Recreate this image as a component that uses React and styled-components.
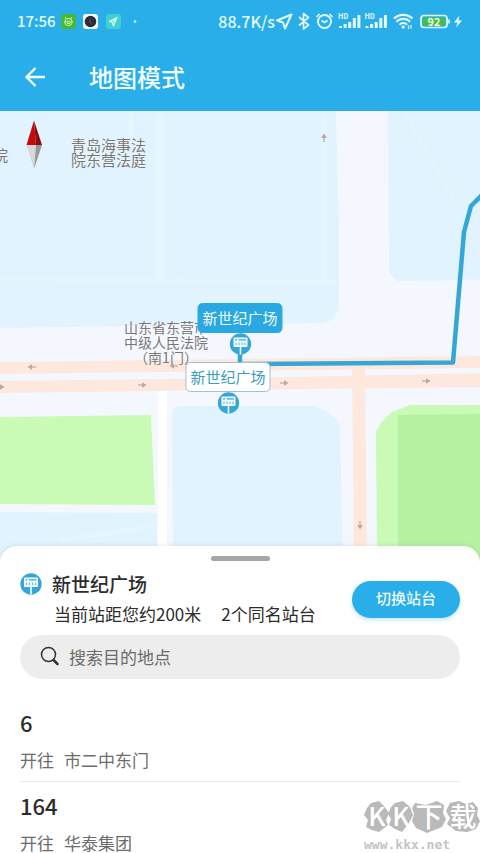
import React from 'react';
import styled, { createGlobalStyle } from 'styled-components';

const routes = [
  { id: 1, name: '6', to: '市二中东门' },
  { id: 2, name: '164', to: '华泰集团' },
];

const arrows = [
  { x: 32, y: 367, turn: 180 },
  { x: 174, y: 366, turn: 180 },
  { x: 0, y: 387, turn: 0 },
  { x: 142, y: 385, turn: 0 },
  { x: 284, y: 383, turn: 0 },
  { x: 426, y: 381, turn: 0 },
  { x: 360, y: 525, turn: 90 },
  { x: 324, y: 138, turn: -90 },
];

const App = () => {
  return (
    <>
      <GlobalStyle />
      <Page>
        <StatusBar />
        <AppBar>
          <BackButton type="button" aria-label="返回">
            <svg width="20" height="20" viewBox="0 0 20 20">
              <path
                d="M20 10H2M10.500 1L1.500 10l9 9"
                fill="none"
                stroke="currentColor"
                strokeWidth="2.400"
              />
            </svg>
          </BackButton>
          <h1>地图模式</h1>
        </AppBar>
        <MapView />
        <Sheet>
          <Handle />
          <Station>
            <div>
              <StationName>
                <StopIcon size={22} />
                新世纪广场
              </StationName>
              <StationInfo>
                <span>当前站距您约200米</span>
                <span>2个同名站台</span>
              </StationInfo>
            </div>
            <SwitchButton type="button">切换站台</SwitchButton>
          </Station>
          <SearchBox>
            <svg width="20" height="20" viewBox="0 0 20 20">
              <circle cx="8.500" cy="8.500" r="7" fill="none" stroke="#333" strokeWidth="1.500" />
              <path d="M13.500 14l4 4" stroke="#333" strokeWidth="2.500" strokeLinecap="round" />
            </svg>
            <input type="text" placeholder="搜索目的地点" aria-label="搜索目的地点" />
          </SearchBox>
          <RouteList>
            {routes.map((node) => (
              <RouteItem key={node.id}>
                <h3>{node.name}</h3>
                <p>
                  <span>开往</span>
                  <span>{node.to}</span>
                </p>
              </RouteItem>
            ))}
          </RouteList>
        </Sheet>
        <Watermark />
      </Page>
    </>
  );
};

const StatusBar = () => {
  return (
    <StatusWrap>
      <StatusGroup $gap={5}>
        <StatusText $size={15}>17:56</StatusText>
        <svg width="76" height="15" viewBox="0 0 76 15">
          <rect width="15" height="15" rx="3" fill="#46b83c" />
          <g fill="none" stroke="#c8f5a8" strokeWidth="1">
            <rect x="4" y="4.500" width="7" height="7" rx="3" />
            <path d="M4 3l1.500 2M11 3L9.500 5M3 8h9M6.500 6.500v1M8.500 6.500v1M6 9.500h3" />
          </g>
          <rect x="22" width="15" height="15" rx="3" fill="#f1fbff" />
          <circle cx="29.500" cy="7.500" r="5.800" fill="#2d2d38" />
          <path d="M29 5v3l2 1.500" fill="none" stroke="#5c5664" strokeWidth="1" />
          <rect x="45" width="15" height="15" rx="3" fill="#41d0cf" />
          <path
            d="M56 3.500L48.500 7.500l3 1 1 3.500zM51.500 8.500L56 3.500"
            fill="none"
            stroke="#e4ffff"
            strokeWidth="1.100"
            strokeLinejoin="round"
          />
          <circle cx="74" cy="7.500" r="1.300" fill="#d8f7ff" />
        </svg>
      </StatusGroup>
      <StatusGroup $gap={0}>
        <StatusText $size={16}>88.7K/s</StatusText>
        <svg width="188" height="18" viewBox="275 12 188 18" fill="none" stroke="#e2fbff">
          <path d="M291.500 14.500L277 20.500l6 2 2 6z" strokeWidth="2" strokeLinejoin="round" />
          <path d="M299 17l9.500 8-5 4V13.500l5 4-9.500 8" strokeWidth="1.700" strokeLinejoin="round" />
          <circle cx="324.500" cy="21.500" r="6.500" strokeWidth="1.900" />
          <path d="M321.500 20.500l3 2 3-2M316.500 17l3-3M332.500 17l-3-3" strokeWidth="1.600" />
          <SignalBars x={338} />
          <SignalBars x={364.500} />
          <g strokeWidth="2.200">
            <path d="M394 18.500a13.500 13.500 0 0 1 18.500 0" />
            <path d="M396.500 21.700a9.500 9.500 0 0 1 13.500 0" />
            <path d="M399.500 24.700a5.500 5.500 0 0 1 7.500 0" />
          </g>
          <circle cx="403.200" cy="27" r="1.700" fill="#e2fbff" stroke="none" />
          <path d="M408.500 25.500v3.500M411 25v3.500" strokeWidth="1.300" />
          <rect x="421" y="15.500" width="26" height="12" rx="3" strokeWidth="1.700" />
          <rect x="423" y="17.500" width="22" height="8" rx="1" fill="#4bbd3c" stroke="none" />
          <path d="M449 19.500v4" strokeWidth="1.600" />
          <text x="434" y="25.500" fontSize="11" fontWeight="700" textAnchor="middle" fill="#f2fff2" stroke="none">
            92
          </text>
          <path d="M459.500 15.500l-5.500 7h3.500l-1.500 5 6-7h-3.500z" fill="#e2fbff" stroke="none" />
        </svg>
      </StatusGroup>
    </StatusWrap>
  );
};

const SignalBars = ({ x }) => (
  <g fill="#e2fbff" stroke="none">
    <text x={x} y="19" fontSize="7" fontWeight="700">
      HD
    </text>
    {[2, 4, 6, 10, 13].map((h, i) => (
      <rect key={h} x={x + 1 + i * 4.6} y={28 - h} width="3" height={h} />
    ))}
  </g>
);

const StopIcon = ({ size }) => (
  <svg width={size} height={size} viewBox="0 0 22 22">
    <circle cx="11" cy="11" r="10.700" fill="#36a7d5" />
    <rect x="4" y="4.500" width="14" height="9.500" rx="1" fill="#f2fdff" />
    <path d="M5.500 6.800h2M9 6.800h7.500" stroke="#36a7d5" strokeWidth="1.200" />
    <path d="M6.500 9.500v2.500M9.500 9.500v2.500M12.500 9.500v2.500M15.500 9.500v2.500" stroke="#6abde0" strokeWidth="1.200" />
    <path d="M11 13v8.500" stroke="#f2fdff" strokeWidth="1.600" />
  </svg>
);

const MapView = () => {
  return (
    <MapWrap>
      <MapCanvas viewBox="0 111 480 452" preserveAspectRatio="xMinYMin slice">
        {/* blocks */}
        <g fill="#e1f3fe">
          <path d="M0 111H336L339 230V306Q337 322 320 323L0 328z" />
          <path d="M388 111H480V280L397 281L389 273z" />
          <path d="M172 414Q172 407 180 406H315Q330 411 340 424L343 563H173z" />
          <path d="M0 512L157 513V563H0z" />
        </g>
        <g stroke="#e5f5fd" fill="none">
          <path d="M160 111V282" strokeWidth="8" />
          <path d="M131 111V135" strokeWidth="5" />
          <path d="M324 111V282" strokeWidth="6" />
          <path d="M0 279L337 282" strokeWidth="4" />
          <path d="M404 111L456 204" strokeWidth="3" />
          <path d="M60 541L157 525" strokeWidth="5" />
        </g>
        <path d="M0 417L151 415L155 505L0 504z" fill="#c9fab6" />
        <path d="M377 563L376 432Q382 419 392 412L410 405H480V563z" fill="#c9fab6" />
        <path d="M398 415L480 414V563H398z" fill="#b4f2a2" />
        {/* streets */}
        <path d="M158 391L167 390V563H158z" fill="#fff" />
        <g fill="#fee8dd">
          <path d="M0 362L240 359L480 356V368L240 371L0 374z" />
          <path d="M0 381L240 378L480 373V387L240 390L0 393z" />
          <path d="M352 366H365L367 563H354z" />
        </g>
        {arrows.map((a) => (
          <g key={`${a.x}-${a.y}`} transform={`translate(${a.x} ${a.y}) rotate(${a.turn})`}>
            <path d="M-4 0H2" stroke="#b8a8a2" strokeWidth="1.200" />
            <path d="M0-2.800L4.500 0L0 2.800z" fill="#b8a8a2" />
          </g>
        ))}
        <path
          d="M240 350V364L453 362.500L464 232L471 206L483 194"
          fill="none"
          stroke="#35a6d8"
          strokeWidth="4.500"
          strokeLinejoin="round"
        />
        {/* compass needle */}
        <path d="M34 120.500L26.500 145H36L34 120.500z" fill="#c80909" />
        <path d="M34 120.500L42 145H36z" fill="#8d0a10" />
        <path d="M26.500 145H36L34 169z" fill="#d8d8d8" />
        <path d="M42 145H36L34 169z" fill="#989898" />
      </MapCanvas>
      <Place $x={-22} $y={36} $size={15}>
        法院
      </Place>
      <Place $x={71} $y={26} $size={15}>
        青岛海事法
        <br />
        院东营法庭
      </Place>
      <Place $x={124} $y={209} $size={14}>
        山东省东营市
        <br />
        中级人民法院
        <br />
        （南1门）
      </Place>
      <Pin $x={240} $y={192}>
        <PinLabel $active>新世纪广场</PinLabel>
        <StopIcon size={22} />
      </Pin>
      <Pin $x={228} $y={251}>
        <PinLabel>新世纪广场</PinLabel>
        <StopIcon size={22} />
      </Pin>
    </MapWrap>
  );
};

const Watermark = () => (
  <WatermarkWrap>
    <svg width="116" height="34" viewBox="0 0 116 34">
      <g fill="#b9b9b9">
        <path d="M7 3L15 1L20 6L25 13L22 20L24 25L15 32L8 30L2 27L4 20L0 15L3 8z" />
        <path d="M31 3L39 1L46 7L49 15L45 23L38 32L31 29L25 25L27 19L24 14L27 7z" />
        <path d="M51 3L62 5L73 1L80 5L79 13L82 19L78 27L63 33L52 28L48 21L50 14L48 8z" />
        <path d="M86 3L95 1L102 4L109 2L114 8L113 15L116 21L112 29L103 32L92 31L83 24L86 18L82 11z" />
      </g>
      <g fill="#fff" fontWeight="500" textAnchor="middle">
        <text x="13" y="26" fontSize="26">K</text>
        <text x="37" y="26" fontSize="26">K</text>
        <text x="65" y="27" fontSize="27">下</text>
        <text x="99" y="27" fontSize="27">载</text>
      </g>
    </svg>
    <span>www.kkx.net</span>
  </WatermarkWrap>
);

const GlobalStyle = createGlobalStyle`
  * {
    box-sizing: border-box;
  }

  body {
    margin: 0;
    font-family: 'Noto Sans CJK SC', 'Noto Sans', sans-serif;
    color: #2c2c2c;
  }

  h1, h2, h3, p, ul {
    margin: 0;
    padding: 0;
  }

  svg {
    display: block;
    flex: none;
  }
`;

const Page = styled.main`
  position: relative;
  display: flex;
  flex-direction: column;
  height: 100vh;
  overflow: hidden;
  background: #fff;
`;

const StatusWrap = styled.div`
  display: flex;
  align-items: center;
  justify-content: space-between;
  flex: none;
  height: 44px;
  padding: 0 17px 2px;
  background: #29aeea;
`;

const StatusGroup = styled.div`
  display: flex;
  align-items: center;
  gap: ${({ $gap }) => $gap}px;
`;

const StatusText = styled.span`
  font-size: ${({ $size }) => $size}px;
  font-weight: 500;
  line-height: 24px;
  color: #e2fbff;
`;

const AppBar = styled.header`
  display: flex;
  align-items: center;
  flex: none;
  gap: 44px;
  height: 67px;
  padding: 0 25px 2px;
  background: #29aeea;
  color: #f2fdff;

  h1 {
    font-size: 24px;
    font-weight: 500;
    line-height: 36px;
  }
`;

const BackButton = styled.button`
  padding: 0;
  border: 0;
  background: none;
  color: inherit;
`;

const MapWrap = styled.section`
  position: relative;
  flex: none;
  height: 452px;
  overflow: hidden;
  background: #f4f8fe;
`;

const MapCanvas = styled.svg`
  width: 100%;
  height: 100%;
`;

const Place = styled.p`
  position: absolute;
  left: ${({ $x }) => $x}px;
  top: ${({ $y }) => $y}px;
  font-size: ${({ $size }) => $size}px;
  line-height: 15px;
  text-align: center;
  white-space: nowrap;
  color: #777;
  text-shadow: 0 0 2px #fff;
`;

const Pin = styled.div`
  position: absolute;
  left: ${({ $x }) => $x}px;
  top: ${({ $y }) => $y}px;
  display: flex;
  flex-direction: column;
  align-items: center;
  transform: translateX(-50%);
`;

const PinLabel = styled.span`
  padding: 0 4px;
  border: 1px solid ${({ $active }) => ($active ? '#29a8e2' : '#9fc0cc')};
  border-radius: 5px;
  background: ${({ $active }) => ($active ? '#29a8e2' : '#fff')};
  color: ${({ $active }) => ($active ? '#f2fdff' : '#3a9ec0')};
  font-size: 15px;
  line-height: 28px;
  white-space: nowrap;
`;

const Sheet = styled.section`
  position: relative;
  flex: 1;
  margin-top: -17px;
  padding: 10px 20px 0;
  border-radius: 17px 17px 0 0;
  background: #fff;
  box-shadow: 0 -1px 4px rgba(0, 0, 0, 0.08);
`;

const Handle = styled.div`
  width: 59px;
  height: 5px;
  margin: 0 auto 8px;
  border-radius: 3px;
  background: #a6a6a6;
`;

const Station = styled.div`
  display: flex;
  align-items: center;
  justify-content: space-between;
`;

const StationName = styled.h2`
  display: flex;
  align-items: center;
  gap: 10px;
  font-size: 19px;
  font-weight: 500;
  line-height: 30px;
`;

const StationInfo = styled.p`
  display: flex;
  gap: 20px;
  padding-left: 34px;
  font-size: 17px;
  line-height: 30px;
`;

const SwitchButton = styled.button`
  width: 108px;
  height: 37px;
  padding: 0 0 3px;
  border: 0;
  border-radius: 19px;
  background: #29aeea;
  box-shadow: 0 2px 4px rgba(41, 174, 234, 0.3);
  color: #f2fdff;
  font-family: inherit;
  font-size: 15px;
  font-weight: 500;
`;

const SearchBox = styled.label`
  display: flex;
  align-items: center;
  gap: 9px;
  height: 44px;
  margin-top: 6px;
  padding: 0 20px 2px;
  border-radius: 22px;
  background: #ededed;

  input {
    flex: 1;
    min-width: 0;
    padding: 0;
    border: 0;
    outline: 0;
    background: none;
    font-family: inherit;
    font-size: 17px;
    color: #2c2c2c;
  }

  input::placeholder {
    color: #6c6c6c;
  }
`;

const RouteList = styled.ul`
  padding-top: 20px;
  list-style: none;
`;

const RouteItem = styled.li`
  padding: 8px 0 9px;
  border-bottom: 1px solid #ebebeb;

  h3 {
    font-size: 22px;
    font-weight: 500;
    line-height: 30px;
  }

  p {
    display: flex;
    gap: 10px;
    margin-top: 11px;
    font-size: 17px;
    line-height: 24px;
    color: #6c6c6c;
  }
`;

const WatermarkWrap = styled.div`
  position: absolute;
  right: 0;
  bottom: 0;
  display: flex;
  flex-direction: column;
  gap: 3px;
  width: 116px;
  pointer-events: none;

  span {
    font-family: 'DejaVu Sans Mono', monospace;
    font-size: 13px;
    font-weight: 700;
    line-height: 16px;
    color: #c4c4c4;
  }
`;

export default App;
